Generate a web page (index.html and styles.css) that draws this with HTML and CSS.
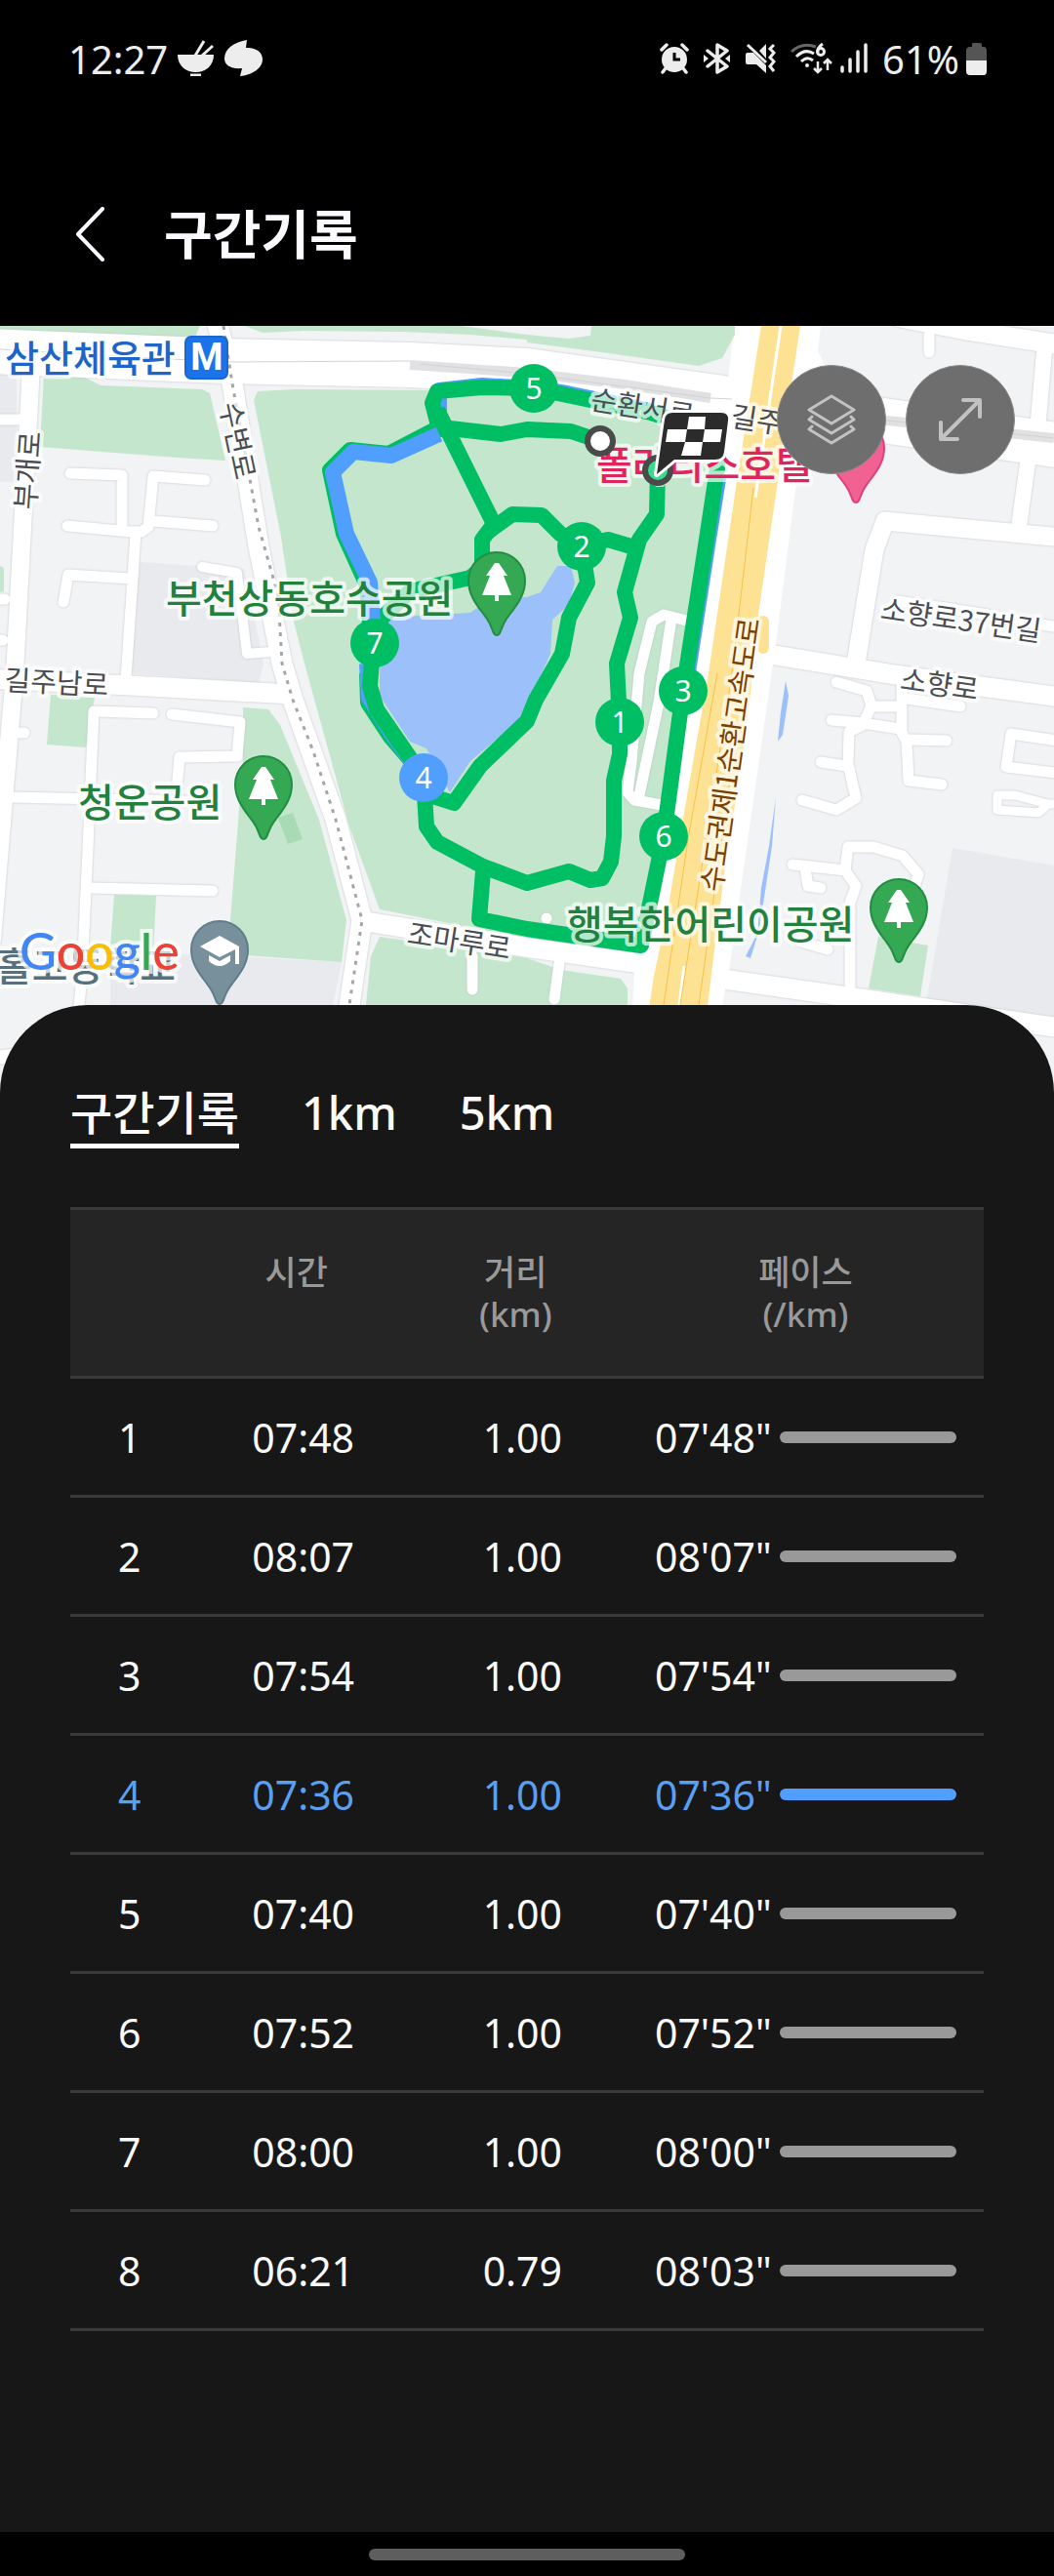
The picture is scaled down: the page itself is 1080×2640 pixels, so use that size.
FILE: index.html
```html
<!DOCTYPE html>
<html lang="ko">
<head>
    <meta charset="UTF-8">
    <meta name="viewport" content="width=device-width, initial-scale=1.0">
    <title>구간기록</title>
    <link rel="stylesheet" href="styles.css">
</head>
<body>
    <div class="status-bar">
        <div class="status-left">
            <span>12:27</span>
            <svg width="38" height="38" viewBox="0 0 38 38" fill="#ededed">
                <path d="M0 15H37C37 26 29 33 18.500 33S0 26 0 15Z"/>
                <path d="M13 34.500H24V37H13Z"/>
                <path d="M18 16L27 1M25 16L36 6" stroke="#ededed" stroke-width="3"/>
            </svg>
            <svg width="40" height="38" viewBox="0 0 40 38" fill="#ededed">
                <path d="M23 0L22 8C32 8 39 12 39 20C39 29 28 36 16 37L18 29C7 30 0 26 0 19C0 9 10 2 23 0Z"/>
            </svg>
        </div>
        <div class="status-right">
            <svg width="30" height="32" viewBox="0 0 30 32">
                <circle cx="15" cy="17" r="13" fill="#ededed"/>
                <path d="M2 7L7 2M28 7L23 2M6 26L3 30M24 26L27 30" stroke="#ededed" stroke-width="3.500" stroke-linecap="round"/>
                <path d="M15 10V17H21" fill="none" stroke="#000" stroke-width="3"/>
            </svg>
            <svg width="28" height="32" viewBox="0 0 28 32">
                <path d="M4 8L24 24L14 30V2L24 8L4 24" fill="none" stroke="#ededed" stroke-width="3.500" stroke-linejoin="round" stroke-linecap="round"/>
                <path d="M0 12L5 16L0 20ZM27 12L22 16L27 20Z" fill="#ededed"/>
            </svg>
            <svg width="31" height="32" viewBox="0 0 31 32" fill="#ededed">
                <path d="M0 12Q0 10 2 10H8L21 23V31L11 22H2Q0 22 0 20ZM14 8L21 1V16Z"/>
                <path d="M2 2L21 20" stroke="#ededed" stroke-width="3"/>
                <path d="M29 2L25 6L29 10L25 15L29 19L25 24L29 29" fill="none" stroke="#ededed" stroke-width="3"/>
            </svg>
            <svg class="wifi" width="44" height="34" viewBox="0 0 44 34" fill="none" stroke="#ededed" stroke-width="3">
                <path d="M1 10Q12 0 26 5" stroke="#666"/>
                <path d="M6 15Q15 6 24 12M11 20Q17 14 23 19"/>
                <circle cx="17" cy="24" r="2" fill="#ededed" stroke="none"/>
                <path d="M33 2Q27 6 28 11"/>
                <circle cx="31" cy="10" r="3.500"/>
                <path d="M28 20V31M24 27L28 31L32 27M38 29V18M34 22L38 18L42 22" stroke-width="2.500"/>
            </svg>
            <svg class="signal" width="28" height="32" viewBox="0 0 28 32" stroke="#ededed" stroke-width="3.500" stroke-linecap="round">
                <path d="M2 25V29M10 17V29M18 9V29M26 2V29"/>
            </svg>
            <span>61%</span>
            <svg width="22" height="33" viewBox="0 0 22 33">
                <path d="M6 1Q6 0 8 0H14Q16 0 16 2V4H18Q21 4 21 8V18H0V8Q0 4 4 4H6Z" fill="#555"/>
                <path d="M0 18H21V29Q21 33 18 33H4Q0 33 0 29Z" fill="#ededed"/>
            </svg>
        </div>
    </div>

    <header class="title-bar">
        <button class="back" aria-label="뒤로">
            <svg width="30" height="56" viewBox="0 0 30 56" fill="none" stroke="#fafaff" stroke-width="4" stroke-linecap="round" stroke-linejoin="round">
                <path d="M27 2L2 28L27 54"/>
            </svg>
        </button>
        <h1>구간기록</h1>
    </header>

    <div class="map">
        <svg class="map-canvas" viewBox="0 334 1080 790">
            <defs>
                <path id="pin" d="M0 56C-5 56 -3 47 -13 35C-24 21 -29 12 -29 0A29 29 0 0 1 29 0C29 12 24 21 13 35C3 47 5 56 0 56Z"/>
                <path id="tree" d="M-2 -19H2L11 -6H7L15 14H2V20H-2V14H-15L-7 -6H-11Z"/>
            </defs>

            <rect y="334" width="1080" height="790" fill="#f1f3f5"/>

            <!-- blocks -->
            <g fill="#e8eaed">
                <path d="M0 380H17V494H0Z"/>
                <path d="M143 576L250 583L262 640L270 680L265 700L133 690Z"/>
                <path d="M113 975L255 981L350 986L339 1040H113Z"/>
                <path d="M976 869L1080 887V1047L950 1023Z"/>
            </g>

            <!-- parks -->
            <g fill="#c3e6cc">
                <path d="M0 334H205L200 345L45 342L0 338Z"/>
                <path d="M251 334L269 341L310 339L413 340L482 343L540 348V343L472 334Z"/>
                <path d="M45 383L83 385L103 395L207 399L215 403L231 472L182 469L41 458Z"/>
                <path d="M0 580L4 582V606L0 607Z"/>
                <path d="M264 401L303 399L441 400L540 400L743 440L738 493L702 687L688 833L654 980L540 962L389 932L358 847L312 680L301 637L288 550L260 410Z"/>
                <path d="M389 960L540 982L575 994L636 1003L643 1013V1040H374L380 980Z"/>
                <path d="M52 712L97 715L88 766L48 763Z"/>
                <path d="M117 917L160 918L157 978L113 972Z"/>
                <path d="M249 725L275 727L287 743L327 840L355 943L350 986L235 978L236 943L249 780Z"/>
                <path d="M900 960L951 969L943 1021L890 1013Z"/>
            </g>
            <path d="M285 838L300 833L310 860L295 865Z" fill="#a8dab5"/>

            <!-- water -->
            <g fill="#9cc0f9">
                <path d="M395 633L482 628L500 615L540 612L554 607L571 580L585 580L589 597L583 620L566 635L564 670L555 690L530 740L482 780L461 812L437 767L420 760L389 713L389 687Z"/>
                <path d="M805 698L808 713L802 753L797 760L800 730Z"/>
                <path d="M795 817L791 867L783 920L778 953L769 982L764 980L776 957L780 910L788 867Z"/>
            </g>

            <!-- streets -->
            <g class="roads" fill="none" stroke="#fff" stroke-width="11" stroke-linejoin="round" stroke-linecap="round">
                <path d="M-10 360L230 370L420 374L540 380L712 404L912 432L1090 457" stroke-width="46"/>
                <path d="M220 320L238 393L265 560L289 680L300 717L344 840L371 943L355 1050" stroke-width="21"/>
                <path d="M32 375L15 690L-8 963" stroke-width="18"/>
                <path d="M-5 430H25M-5 614H5M-5 656H3"/>
                <path d="M-5 696L124 702L290 711" stroke-width="20"/>
                <path d="M72 485L125 487V540M210 492L157 488L152 540L145 545L134 545L69 539M157 534L218 539"/>
                <path d="M139 545L136 593L129 695M134 593L70 589L65 617"/>
                <path d="M207 581L243 587L253 670L277 668" stroke-width="10"/>
                <path d="M157 731L96 729L90 870L84 1000L80 1040M176 732L246 740L243 775L184 776L181 810"/>
                <path d="M11 817L193 821M12 751H25M93 910L218 913"/>
                <path d="M372 944L540 971L660 988L745 1004L865 1021L1090 1054" stroke-width="20"/>
                <path d="M484 980V1014M573 987L568 1024"/>
                <path d="M560 941V941"/>
                <path d="M703 636L680 630L668 637L655 690L647 780L643 812L650 820L678 825M688 634L675 720L655 815"/>
                <path d="M920 325L988 338L1090 354" stroke-width="20"/>
                <path d="M952 343V361"/>
                <path d="M1070 360L1064 430M1055 460L1044 540" stroke-width="16"/>
                <path d="M1090 551L907 534L896 563L877 680" stroke-width="19"/>
                <path d="M785 670L877 685L920 692L1090 715" stroke-width="20"/>
                <path d="M920 616L1000 628L1090 644"/>
                <path d="M857 699L888 708L893 723L884 743L870 750L869 783L877 818L857 830L822 820"/>
                <path d="M852 738L884 741L922 747L929 760L931 800L965 804M924 700V747M893 724H924M929 716L984 724M932 758L970 759M841 781L867 785"/>
                <path d="M1090 760L1036 752L1031 786L1090 793"/>
                <path d="M1022 815V830L1064 833L1074 824L1040 815ZM1070 824H1090" stroke-width="9"/>
                <path d="M812 886L866 892L869 868L895 868L925 877L941 896L936 912M866 892L877 908L871 925V1018M825 890L828 908L841 910M820 965L848 973"/>
                <path d="M-10 1085L60 1075" stroke-width="14"/>
            </g>
            <path d="M752 334H841L838 360L845 374L815 502L795 660L747 995L738 1040H648L650 990L688 833L702 690L738 493L745 400Z" fill="#fff"/>
            <path d="M540 343L582 347L605 344L606 334H753V343L740 367L716 375L609 360L540 351Z" fill="#c3e6cc"/>

            <!-- railway -->
            <path d="M420 374L540 382L640 394L728 408M900 430L1080 449" fill="none" stroke="#e1e1e3" stroke-width="10"/>
            <path d="M0 358L230 371L420 370M430 373L540 383L728 408L750 409M900 430L1080 449" fill="none" stroke="#d2d2d5" stroke-width="1"/>
            <path d="M229 334L238 393L265 540L285 610L289 680L300 717L321 770L344 840L371 943L358 1030" fill="none" stroke="#a6a6a8" stroke-width="3" stroke-dasharray="4 6"/>

            <!-- expressway -->
            <path d="M780 334H820L804 440L796 500L777 630L768 720L757 800L744 880L730 990L724 1040H664L670 1000L683 940L698 850L726 690L755 493Z" fill="#fde293"/>
            <path d="M782 637V664" stroke="#fde293" stroke-width="12" stroke-linecap="round"/>
            <path d="M800 334L774 510M701 990L696 1030" stroke="#fff" stroke-width="3"/>
            <path d="M772 500L750 690L697 1030M735 690L705 860L680 1030M748 800L716 1030" fill="none" stroke="#f7c04a" stroke-width="1"/>

            <!-- running route -->
            <g fill="none" stroke-width="16" stroke-linejoin="round">
                <path d="M450 438L398 465L359 461L338 482L352 547L376 600L379 640M376 690L377 720L400 755L430 790" stroke="#00be64"/>
                <path d="M450 425V400L494 395L547 398L581 403L667 421M737 485L726 553L702 708M376 680L378 715L400 750L425 785" stroke="#509fff"/>
                <path d="M615 452L585 442L540 440L513 445L461 439L450 440L443 413L448 401L494 397L547 398L581 405L667 423L738 445L735 480L724 553L700 708L680 857L674 887L657 969L540 952L491 942L495 893" stroke="#00be64"/>
                <path d="M448 420L506 537L494 553V582L482 592L420 606L384 640L379 703L386 727L434 797L437 847L448 863L495 888L540 905L583 893L605 902L617 900L626 883L629 857V800L635 773V740L632 680L646 633L640 607L655 553L673 527L674 482" stroke="#00be64"/>
                <path d="M500 545L525 527L555 528L574 547L596 560L623 553L650 561M596 560L602 597L583 633L576 670L549 717L540 739L492 785L465 823L440 815" stroke="#00be64"/>
                <path d="M450 445L401 467L362 463L341 484L355 547L379 597L382 637L384 659" stroke="#509fff"/>
            </g>

            <g class="marker">
                <circle cx="547" cy="398" r="25"/><text x="547" y="409">5</text>
                <circle cx="596" cy="560" r="25"/><text x="596" y="571">2</text>
                <circle cx="384" cy="659" r="25"/><text x="384" y="670">7</text>
                <circle cx="700" cy="708" r="25"/><text x="700" y="719">3</text>
                <circle cx="635" cy="740" r="25"/><text x="635" y="751">1</text>
                <circle cx="680" cy="857" r="25"/><text x="680" y="868">6</text>
                <circle class="best" cx="434" cy="797" r="25"/><text x="434" y="808">4</text>
            </g>

            <!-- place names -->
            <g class="label street">
                <text transform="translate(246 451) rotate(78)">수변로</text>
                <text transform="translate(26 482) rotate(-86)">부개로</text>
                <text transform="translate(58 697) rotate(3)">길주남로</text>
                <text transform="translate(659 415) rotate(9)">순환서로</text>
                <text transform="translate(789 430) rotate(9)">길주로</text>
                <text transform="translate(985 633) rotate(8)">소향로37번길</text>
                <text transform="translate(963 699) rotate(8)">소향로</text>
                <text transform="translate(471 962) rotate(9)">조마루로</text>
                <text class="expressway" transform="translate(746 773) rotate(-82)">수도권제1순환고속도로</text>
            </g>
            <g class="label place">
                <text class="station" x="5" y="381">삼산체육관</text>
                <text class="park" x="170" y="628">부천상동호수공원</text>
                <text class="park" x="80" y="837">청운공원</text>
                <text class="park" x="581" y="962">행복한어린이공원</text>
                <text class="hotel" x="611" y="491">폴라리스호텔</text>
                <text class="school" x="-4" y="1005">홀고등학교</text>
            </g>

            <rect x="190" y="345" width="43" height="43" rx="6" fill="#1a73e8" stroke="#1967d2" stroke-width="2"/>
            <text class="metro" x="212" y="379">M</text>

            <g stroke-width="2">
                <use href="#pin" x="509" y="595" fill="#34a853" stroke="#238e43"/>
                <use href="#tree" x="509" y="596" fill="#fff" stroke="none"/>
                <use href="#pin" x="270" y="804" fill="#34a853" stroke="#238e43"/>
                <use href="#tree" x="270" y="805" fill="#fff" stroke="none"/>
                <use href="#pin" x="921" y="930" fill="#34a853" stroke="#238e43"/>
                <use href="#tree" x="921" y="931" fill="#fff" stroke="none"/>
                <use href="#pin" x="877" y="459" fill="#f06292" stroke="#e0407c"/>
                <use href="#pin" x="225" y="973" fill="#78909c" stroke="#607d8b"/>
                <path d="M205 970L225 959L245 970V988H241V973L225 981ZM214 979L225 985L236 979V985Q225 995 214 985Z" fill="#fff"/>
            </g>

            <!-- start and finish -->
            <circle cx="615" cy="452" r="13" fill="#fff" stroke="#4a4a4a" stroke-width="6"/>
            <circle cx="674" cy="482" r="13" fill="#34dc8c" stroke="#4a4a4a" stroke-width="6"/>
            <path d="M689 423H739Q747 423 746 431L742 463Q741 471 733 471H691L673 486L681 430Q682 423 689 423Z" fill="#2b2b2b" stroke="#fff" stroke-width="6" stroke-linejoin="round" paint-order="stroke"/>
            <path d="M706 427H723L722 440H740L738 453H720L718 467H698L702 453H682L684 440H704ZM704 440L702 453H720L722 440Z" fill="#fff" fill-rule="evenodd"/>

            <text class="google" x="20" y="994"><tspan fill="#4285f4">G</tspan><tspan fill="#ea4335">o</tspan><tspan fill="#fbbc04">o</tspan><tspan fill="#4285f4">g</tspan><tspan fill="#34a853">l</tspan><tspan fill="#ea4335">e</tspan></text>
        </svg>
        <div class="map-buttons">
            <button aria-label="지도 유형">
                <svg width="50" height="54" viewBox="0 0 50 54" fill="none" stroke="#c2c2c2" stroke-width="3" stroke-linejoin="round" stroke-linecap="round">
                    <path d="M25 3L48 17L25 31L2 17Z"/>
                    <path d="M5 24L2 27L25 41L48 27L45 24M5 34L2 37L25 51L48 37L45 34"/>
                </svg>
            </button>
            <button aria-label="전체 화면">
                <svg width="46" height="46" viewBox="0 0 46 46" fill="none" stroke="#c2c2c2" stroke-width="4" stroke-linejoin="round" stroke-linecap="round">
                    <path d="M3 43L43 3M26 3H43V20M3 26V43H20"/>
                </svg>
            </button>
        </div>
    </div>

    <main class="sheet">
        <nav class="tabs">
            <button class="active">구간기록</button>
            <button>1km</button>
            <button>5km</button>
        </nav>

        <table class="laps">
            <thead>
                <tr>
                    <th class="no"></th>
                    <th class="time">시간</th>
                    <th class="distance">거리<br>(km)</th>
                    <th class="pace">페이스<br>(/km)</th>
                </tr>
            </thead>
            <tbody>
                <tr>
                    <td>1</td><td>07:48</td><td>1.00</td>
                    <td><div class="pace-cell"><span>07'48"</span><i class="bar"></i></div></td>
                </tr>
                <tr>
                    <td>2</td><td>08:07</td><td>1.00</td>
                    <td><div class="pace-cell"><span>08'07"</span><i class="bar"></i></div></td>
                </tr>
                <tr>
                    <td>3</td><td>07:54</td><td>1.00</td>
                    <td><div class="pace-cell"><span>07'54"</span><i class="bar"></i></div></td>
                </tr>
                <tr class="fastest">
                    <td>4</td><td>07:36</td><td>1.00</td>
                    <td><div class="pace-cell"><span>07'36"</span><i class="bar"></i></div></td>
                </tr>
                <tr>
                    <td>5</td><td>07:40</td><td>1.00</td>
                    <td><div class="pace-cell"><span>07'40"</span><i class="bar"></i></div></td>
                </tr>
                <tr>
                    <td>6</td><td>07:52</td><td>1.00</td>
                    <td><div class="pace-cell"><span>07'52"</span><i class="bar"></i></div></td>
                </tr>
                <tr>
                    <td>7</td><td>08:00</td><td>1.00</td>
                    <td><div class="pace-cell"><span>08'00"</span><i class="bar"></i></div></td>
                </tr>
                <tr>
                    <td>8</td><td>06:21</td><td>0.79</td>
                    <td><div class="pace-cell"><span>08'03"</span><i class="bar"></i></div></td>
                </tr>
            </tbody>
        </table>
    </main>

    <div class="gesture-bar"><span class="pill"></span></div>
</body>
</html>
```
FILE: styles.css
```css
* {
    margin: 0;
    padding: 0;
    box-sizing: border-box;
}

body {
    background: #000;
    color: #fafafa;
    font-family: "Noto Sans", "Noto Sans CJK KR", sans-serif;
    min-height: 100vh;
    display: flex;
    flex-direction: column;
}

button {
    background: none;
    border: none;
    color: inherit;
    font-family: inherit;
    cursor: pointer;
}

svg {
    display: block;
}

/* status bar */
.status-bar {
    display: flex;
    justify-content: space-between;
    align-items: center;
    height: 120px;
    padding: 0 68px 0 70px;
    font-size: 40px;
    color: #ededed;
}

.status-left, .status-right {
    display: flex;
    align-items: center;
}

.status-left {
    gap: 10px;
}

.status-right {
    gap: 15px;
}

.status-right span {
    margin-right: -8px;
}

.wifi {
    margin-right: -8px;
}

/* title */
.title-bar {
    display: flex;
    align-items: center;
    gap: 60px;
    padding: 84px 78px 58px;
}

.title-bar h1 {
    font-size: 54px;
    line-height: 72px;
    font-weight: 700;
    color: #fafaff;
}

/* map */
.map {
    position: relative;
}

.map-canvas {
    width: 100%;
    height: auto;
}

.roads {
    filter: drop-shadow(0 0 1px #c0c3c8);
}

.marker circle {
    fill: #00be64;
}

.marker .best {
    fill: #509fff;
}

.marker text {
    fill: #fff;
    font-size: 30px;
    text-anchor: middle;
}

.label {
    stroke: #fff;
    stroke-opacity: 0.7;
    stroke-width: 8px;
    stroke-linejoin: round;
    paint-order: stroke;
    font-family: "Noto Sans CJK KR", sans-serif;
}

.street {
    fill: #4a4d52;
    font-size: 29px;
    text-anchor: middle;
    dominant-baseline: central;
}

.place {
    font-size: 40px;
    font-weight: 500;
}

.expressway { fill: #7a4000; }
.station { fill: #1f65c8; font-size: 38px; }
.park { fill: #22813c; }
.hotel { fill: #e0245e; }
.school { fill: #56717d; }

.metro {
    fill: #fff;
    font-family: Roboto, sans-serif;
    font-size: 38px;
    font-weight: 700;
    text-anchor: middle;
}

.google {
    font-family: Lato, sans-serif;
    font-size: 52px;
    font-weight: 500;
    stroke: #fff;
    stroke-opacity: 0.7;
    stroke-width: 8px;
    paint-order: stroke;
}

.map-buttons {
    position: absolute;
    top: 40px;
    right: 40px;
    display: flex;
    gap: 20px;
}

.map-buttons button {
    display: flex;
    justify-content: center;
    align-items: center;
    width: 112px;
    height: 112px;
    border-radius: 50%;
    border: 1px solid #8a8a8a;
    background: #6e6e6e;
}

/* records */
.sheet {
    flex: 1;
    position: relative;
    margin-top: -94px;
    padding: 78px 72px;
    background: #171717;
    border-radius: 90px 90px 0 0;
}

.tabs {
    display: flex;
    gap: 64px;
    margin-bottom: 60px;
}

.tabs button {
    font-size: 47px;
    line-height: 64px;
    font-weight: 500;
    border-bottom: 5px solid transparent;
}

.tabs .active {
    border-bottom-color: #fff;
}

.laps {
    width: 100%;
    table-layout: fixed;
    border-collapse: collapse;
    border-top: 3px solid #3a3a3a;
}

.laps tr {
    border-bottom: 3px solid #3a3a3a;
}

.laps th {
    padding: 42px 0;
    background: #252525;
    color: #999;
    font-size: 35px;
    line-height: 43px;
    font-weight: 500;
    vertical-align: top;
}

.laps .no { width: 13%; }
.laps .time { width: 25%; padding-right: 14px; }
.laps .distance { width: 23%; padding-right: 14px; }
.laps .pace { width: 39%; }

.laps td {
    height: 122px;
    font-size: 41px;
    text-align: center;
}

.pace-cell {
    display: flex;
    align-items: center;
    padding: 0 28px 0 28px;
    text-align: left;
}

.pace-cell span {
    width: 128px;
}

.bar {
    flex: 1;
    height: 12px;
    border-radius: 6px;
    background: #999;
}

.fastest {
    color: #5a9ff0;
}

.fastest .bar {
    background: #509fff;
}

.gesture-bar {
    display: flex;
    justify-content: center;
    align-items: center;
    height: 45px;
}

.pill {
    width: 30%;
    height: 12px;
    border-radius: 6px;
    background: #5e5e5e;
}
```
